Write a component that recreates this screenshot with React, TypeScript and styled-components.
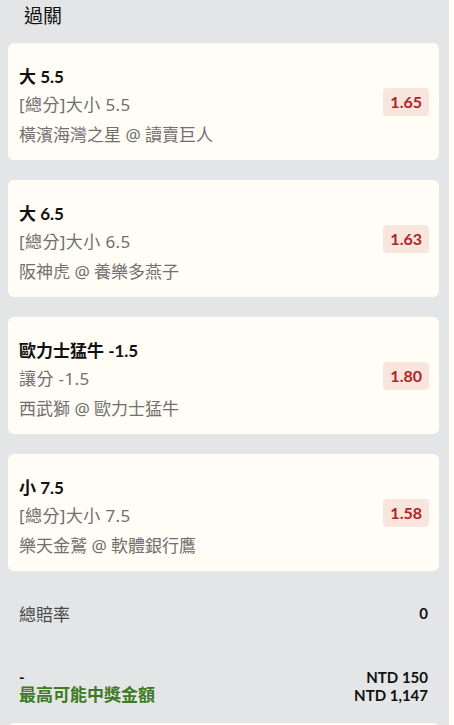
import React from "react";
import styled, { createGlobalStyle } from "styled-components";

// 全域
const GlobalStyle = createGlobalStyle`
  html, body {
    margin: 0;
    padding: 0;
    overflow: hidden;
    background-color: #fffdf5;
    font-family: Lato, "Noto Sans CJK TC", sans-serif;
  }
`;

// 過關面板
const Panel = styled.div`
  width: 449px;
  height: 725px;
  box-sizing: border-box;
  padding: 0 10px 0 8px;
  background-color: #e4e5e7;
  overflow: hidden;
`;

const Header = styled.h2`
  margin: 0 0 14px;
  padding-left: 16px;
  line-height: 29px;
  font-size: 19px;
  font-weight: 400;
  color: #111;
  font-family: "Noto Sans CJK TC", sans-serif;
`;

const BetList = styled.div`
  display: flex;
  flex-direction: column;
  gap: 20px;
`;

const BetCard = styled.div`
  display: flex;
  align-items: center;
  justify-content: space-between;
  padding: 0 10px 0 11px;
  background-color: #fffdf5;
  border-radius: 6px;
`;

const BetInfo = styled.div`
  display: flex;
  flex-direction: column;
  padding: 21px 0 12px;
`;

const Selection = styled.div`
  line-height: 26px;
  font-size: 17px;
  font-weight: 700;
  color: #111;
`;

const Market = styled.div<{ $gap: number; $spacing?: number }>`
  margin-top: ${(p) => p.$gap}px;
  line-height: 26px;
  font-size: 17px;
  letter-spacing: ${(p) => p.$spacing ?? 0}px;
  color: #707070;
  font-family: "Noto Sans", "Noto Sans CJK TC", sans-serif;
`;

const Odds = styled.span`
  height: 28px;
  padding: 0 7px;
  line-height: 28px;
  border-radius: 4px;
  background-color: #f8e5de;
  color: #b3241e;
  font-size: 16px;
  font-weight: 700;
`;

// 總結
const SummaryRow = styled.div`
  display: flex;
  justify-content: space-between;
  align-items: center;
  margin-top: 30px;
  padding: 0 11px;
  height: 24px;
`;

const SummaryLabel = styled.span`
  font-size: 17px;
  color: #4a4a4a;
  font-family: "Noto Sans CJK TC", sans-serif;
`;

const BoldValue = styled.span`
  font-size: 15px;
  font-weight: 700;
  color: #111;
`;

const PayoutBlock = styled.div`
  display: grid;
  grid-template-columns: 1fr auto;
  margin: 43px 0 19px;
  padding: 0 11px;
  line-height: 18px;
`;

const PayoutLabel = styled.span`
  font-size: 17px;
  font-weight: 700;
  color: #3b7b22;
`;

const Right = styled(BoldValue)`
  text-align: right;
`;

const NextCard = styled.div`
  height: 60px;
  background-color: #fffdf5;
  border-radius: 6px;
`;

type Bet = {
  selection: string;
  market: string;
  teams: string;
  odds: string;
};

const bets: Bet[] = [
  { selection: "大 5.5", market: "[總分]大小 5.5", teams: "橫濱海灣之星 @ 讀賣巨人", odds: "1.65" },
  { selection: "大 6.5", market: "[總分]大小 6.5", teams: "阪神虎 @ 養樂多燕子", odds: "1.63" },
  { selection: "歐力士猛牛 -1.5", market: "讓分 -1.5", teams: "西武獅 @ 歐力士猛牛", odds: "1.80" },
  { selection: "小 7.5", market: "[總分]大小 7.5", teams: "樂天金鷲 @ 軟體銀行鷹", odds: "1.58" },
];

const App: React.FC = () => {
  return (
    <>
      <GlobalStyle />
      <Panel>
        <Header>過關</Header>
        <BetList>
          {bets.map((bet) => (
            <BetCard key={bet.selection}>
              <BetInfo>
                <Selection>{bet.selection}</Selection>
                <Market $gap={2} $spacing={0.4}>
                  {bet.market}
                </Market>
                <Market $gap={4}>{bet.teams}</Market>
              </BetInfo>
              <Odds>{bet.odds}</Odds>
            </BetCard>
          ))}
        </BetList>
        <SummaryRow>
          <SummaryLabel>總賠率</SummaryLabel>
          <BoldValue>0</BoldValue>
        </SummaryRow>
        <PayoutBlock>
          <BoldValue>-</BoldValue>
          <Right>NTD 150</Right>
          <PayoutLabel>最高可能中獎金額</PayoutLabel>
          <Right>NTD 1,147</Right>
        </PayoutBlock>
        <NextCard />
      </Panel>
    </>
  );
};

export default App;
